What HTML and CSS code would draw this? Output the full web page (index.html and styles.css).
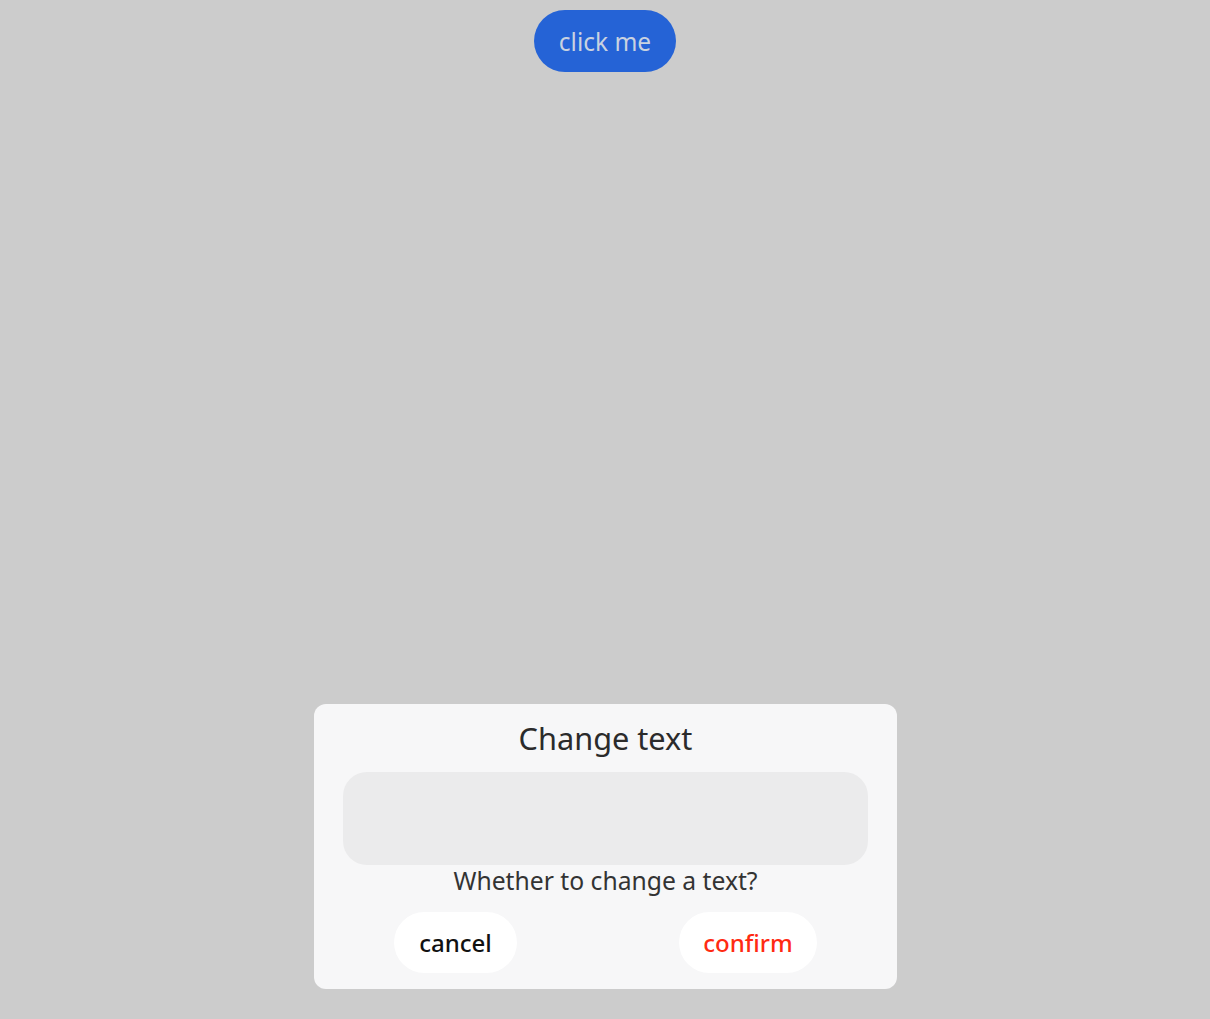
FILE: index.html
```html
<!DOCTYPE html>
<html>
<head>
<meta charset="utf-8">
<link rel="stylesheet" href="styles.css">
</head>
<body>
<div class="page">
  <button class="primary">click me</button>
</div>
<div class="dialog">
  <div class="title">Change text</div>
  <div class="input"></div>
  <div class="message">Whether to change a text?</div>
  <div class="actions">
    <button class="action cancel">cancel</button>
    <button class="action confirm">confirm</button>
  </div>
</div>
</body>
</html>
```
FILE: styles.css
```css
html, body {
  margin: 0;
  padding: 0;
  height: 100%;
}
body {
  background: #cccccc;
  font-family: "Noto Sans", "Open Sans", sans-serif;
  position: relative;
  overflow: hidden;
}
.page {
  display: flex;
  justify-content: center;
  padding-top: 10px;
}
.primary {
  width: 142px;
  height: 62px;
  border: none;
  border-radius: 31px;
  background: #2563d6;
  color: #c9d2e0;
  font-family: inherit;
  font-size: 24.5px;
  padding: 0;
}
.dialog {
  position: absolute;
  left: 314px;
  bottom: 30px;
  width: 583px;
  box-sizing: border-box;
  background: #f7f7f8;
  border-radius: 12px;
  padding: 14px 29px 16px;
  display: flex;
  flex-direction: column;
}
.title {
  height: 40px;
  line-height: 40px;
  text-align: center;
  font-size: 30.7px;
  color: #2b2b2b;
}
.input {
  margin-top: 14px;
  height: 93px;
  border-radius: 24px;
  background: #ebebec;
}
.message {
  height: 32px;
  line-height: 32px;
  text-align: center;
  font-size: 24.7px;
  color: #333333;
}
.actions {
  margin-top: 15px;
  display: flex;
  justify-content: space-between;
  padding: 0 51px;
}
.action {
  height: 61px;
  border: none;
  border-radius: 31px;
  background: #ffffff;
  font-family: inherit;
  font-size: 24px;
  font-weight: 500;
  padding: 0;
}
.cancel {
  width: 123px;
  color: #111111;
}
.confirm {
  width: 138px;
  color: #ff2a12;
}
```
